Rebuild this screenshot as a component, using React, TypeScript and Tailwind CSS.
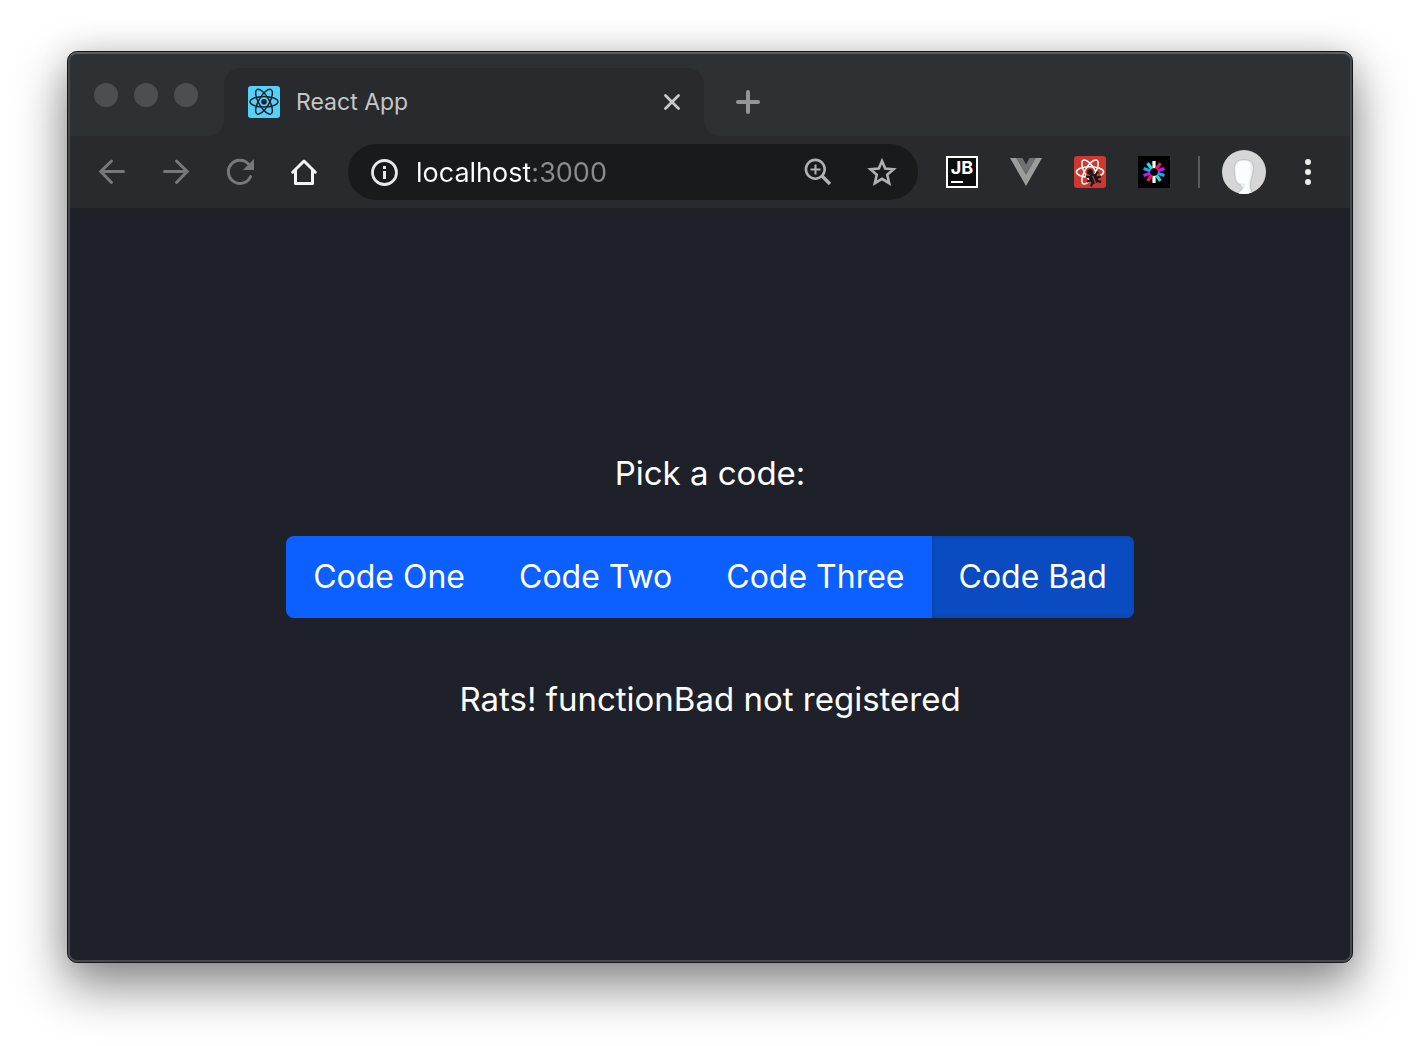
import { useState } from "react";

const codes = ["Code One", "Code Two", "Code Three", "Code Bad"];

function ReactIcon() {
  return (
    <svg viewBox="0 0 32 32" className="size-8 shrink-0" aria-hidden="true">
      <rect width="32" height="32" rx="3" fill="#53d1fd" />
      <g fill="none" stroke="#20232a" strokeWidth="1.5">
        <ellipse cx="16" cy="15.7" rx="14" ry="5.3" />
        <ellipse cx="16" cy="15.7" rx="14" ry="5.3" transform="rotate(60 16 15.7)" />
        <ellipse cx="16" cy="15.7" rx="14" ry="5.3" transform="rotate(120 16 15.7)" />
      </g>
      <circle cx="16" cy="15.7" r="2.8" fill="#20232a" />
    </svg>
  );
}

function BackIcon() {
  return (
    <svg viewBox="0 0 32 32" className="size-8" fill="none" stroke="#77787a" strokeWidth="3" strokeLinecap="round" aria-hidden="true">
      <path d="M27.5 15.5H5M15.5 5L4.8 15.5L15.5 26.5" />
    </svg>
  );
}

function ForwardIcon() {
  return (
    <svg viewBox="0 0 32 32" className="size-8" fill="none" stroke="#77787a" strokeWidth="3" strokeLinecap="round" aria-hidden="true">
      <path d="M4.5 15.5H27M16.5 5L27.2 15.5L16.5 26.5" />
    </svg>
  );
}

function ReloadIcon() {
  return (
    <svg viewBox="0 0 32 32" className="size-8" aria-hidden="true">
      <path d="M24.5 8A11.6 11.6 0 1 0 26.6 20.5" fill="none" stroke="#77787a" strokeWidth="3" strokeLinecap="round" />
      <path d="M30 3V14H19Z" fill="#77787a" />
    </svg>
  );
}

function HomeIcon() {
  return (
    <svg viewBox="0 0 32 32" className="size-8" fill="none" stroke="#f4f4f5" strokeWidth="3" strokeLinejoin="round" strokeLinecap="round" aria-hidden="true">
      <path d="M4.7 16.2L16 5L27.3 16.2M7.5 14.5V27.5H24.5V14.5" />
    </svg>
  );
}

function InfoIcon() {
  return (
    <svg viewBox="0 0 28 28" className="size-7 shrink-0" aria-hidden="true">
      <circle cx="14.5" cy="14.5" r="12" fill="none" stroke="#e8e8e9" strokeWidth="2.8" />
      <path d="M13 8h3v3h-3zM13 13h3v8h-3z" fill="#e8e8e9" />
    </svg>
  );
}

function ZoomIcon() {
  return (
    <svg viewBox="0 0 32 32" className="size-8" fill="none" stroke="#b0b1b2" aria-hidden="true">
      <circle cx="13.3" cy="13.3" r="9.4" strokeWidth="2.6" />
      <path d="M20 20L28 28" strokeWidth="3.4" />
      <path d="M13.5 8.5v10M8.5 13.5h10" strokeWidth="2" />
    </svg>
  );
}

function StarIcon() {
  return (
    <svg viewBox="0 0 32 32" className="size-8" fill="none" stroke="#b0b1b2" strokeWidth="2.6" aria-hidden="true">
      <path d="M16 5L19.2 12.5L27.6 13.3L21.2 18.7L23.2 27.2L16 22.8L8.8 27.2L10.8 18.7L4.4 13.3L12.8 12.5Z" />
    </svg>
  );
}

function VueIcon() {
  return (
    <svg viewBox="0 0 32 32" className="size-8" aria-hidden="true">
      <path d="M0 2H6.5L16 18.5L25.5 2H32L16 30Z" fill="#9c9c9c" />
      <path d="M6.5 2H12.5L16 8.5L19.5 2H25.5L16 18.5Z" fill="#707173" />
    </svg>
  );
}

function ReactDebugIcon() {
  return (
    <svg viewBox="0 0 32 32" className="size-8" aria-hidden="true">
      <rect width="32" height="32" rx="3" fill="#cf372f" />
      <g fill="none" stroke="#fff" strokeWidth="1.5">
        <ellipse cx="16" cy="16" rx="13.6" ry="5.2" />
        <ellipse cx="16" cy="16" rx="13.6" ry="5.2" transform="rotate(60 16 16)" />
        <ellipse cx="16" cy="16" rx="13.6" ry="5.2" transform="rotate(120 16 16)" />
      </g>
      <path d="M15 21L26 18L27 29H16Z" fill="#cf372f" />
      <circle cx="16" cy="15.8" r="2.9" fill="#16181b" />
      <g transform="rotate(-22 16 16)">
        <ellipse cx="17" cy="23.6" rx="4.2" ry="5.2" fill="#16181b" />
        <path d="M10.5 18.5l3.5 2.5M9.5 24h4M11.5 29.5l3-2.5M23.5 18.5l-3.5 2.5M24.5 24h-4M22.5 29.5l-3-2.5" stroke="#16181b" strokeWidth="2.2" />
        <path d="M17 20.5V29" stroke="#cf372f" strokeWidth="1.2" />
      </g>
    </svg>
  );
}

const rays = [
  "#ffffff", "#ff1254", "#cf12f5", "#1ba4f5", "#23e5d5",
  "#ffffff", "#ff1254", "#cf12f5", "#1ba4f5", "#23e5d5",
];

function BurstIcon() {
  return (
    <svg viewBox="0 0 32 32" className="size-8" aria-hidden="true">
      <rect width="32" height="32" fill="#000" />
      {rays.map((color, i) => (
        <rect key={i} x="14.4" y="5" width="3.2" height="7.2" fill={color} transform={`rotate(${i * 36} 16 16)`} />
      ))}
    </svg>
  );
}

function AvatarIcon() {
  return (
    <svg viewBox="0 0 44 44" className="size-11" aria-hidden="true">
      <defs>
        <clipPath id="avatar-circle">
          <circle cx="22" cy="22" r="22" />
        </clipPath>
      </defs>
      <g clipPath="url(#avatar-circle)">
        <rect width="44" height="44" fill="#d6d6d6" />
        <path d="M12.5 22C11.5 13 15 9.5 22 9.5C29 9.5 32.5 13 31.3 21C30.5 27 28 31 28.5 37L30.5 45H12C16 42 20 41 20 38C20 36.5 17 36.5 18.5 34.5C13.5 34 13 29 12.5 22Z" fill="#e6ecf1" stroke="#b0bcc6" strokeWidth="0.8" />
        <path d="M13.5 22C12.5 13 17 11 22 11C28 11 30 14 29 22C28.5 28 26 31 27 37L29 45H14C19 42 23 39 23 33.5L18 33.5C14 31 14 27 13.5 22Z" fill="#fcfdff" />
      </g>
    </svg>
  );
}

function TabStrip() {
  return (
    <div className="flex h-[82px] items-end bg-[#2e3134]">
      <div className="flex h-[82px] w-[138px] shrink-0 items-center gap-4 pl-6">
        <button type="button" aria-label="Close window" className="size-6 rounded-full bg-[#4b4f52]" />
        <button type="button" aria-label="Minimize window" className="size-6 rounded-full bg-[#4b4f52]" />
        <button type="button" aria-label="Zoom window" className="size-6 rounded-full bg-[#4b4f52]" />
      </div>
      <div className="size-4 shrink-0 bg-[#292a2d]">
        <div className="size-4 rounded-br-2xl bg-[#2e3134]" />
      </div>
      <div className="flex h-[68px] w-[480px] items-center gap-4 rounded-t-2xl bg-[#292a2d] px-6">
        <ReactIcon />
        <span className="flex-1 font-[Inter] text-[23px] text-[#c5c6c7]">React App</span>
        <button type="button" aria-label="Close tab">
          <svg viewBox="0 0 16 16" className="size-4" stroke="#c9cacb" strokeWidth="2.8" strokeLinecap="round" aria-hidden="true">
            <path d="M1.5 1.5L14.5 14.5M14.5 1.5L1.5 14.5" />
          </svg>
        </button>
      </div>
      <div className="size-4 shrink-0 bg-[#292a2d]">
        <div className="size-4 rounded-bl-2xl bg-[#2e3134]" />
      </div>
      <button type="button" aria-label="New tab" className="flex h-[68px] items-center px-4">
        <svg viewBox="0 0 24 24" className="size-6" stroke="#919699" strokeWidth="4" strokeLinecap="round" aria-hidden="true">
          <path d="M12 2V22M2 12H22" />
        </svg>
      </button>
    </div>
  );
}

function Toolbar() {
  return (
    <div className="flex h-[72px] items-center bg-[#292a2d] px-[26px]">
      <div className="flex gap-8">
        <button type="button" aria-label="Back"><BackIcon /></button>
        <button type="button" aria-label="Forward"><ForwardIcon /></button>
        <button type="button" aria-label="Reload"><ReloadIcon /></button>
        <button type="button" aria-label="Home"><HomeIcon /></button>
      </div>
      <div className="mx-7 flex h-14 min-w-0 flex-1 items-center rounded-full bg-[#191a1b] pr-5 pl-[22px]">
        <InfoIcon />
        <input
          type="text"
          aria-label="Address"
          defaultValue="localhost:3000"
          className="ml-[18px] min-w-0 flex-1 bg-linear-to-r from-white from-[114px] to-[#8b8c8d] to-[114px] bg-clip-text pt-[2px] font-[Inter] text-[27px] text-transparent caret-white outline-none"
        />
        <div className="flex gap-8">
          <button type="button" aria-label="Zoom level"><ZoomIcon /></button>
          <button type="button" aria-label="Bookmark this page"><StarIcon /></button>
        </div>
      </div>
      <div className="flex gap-8">
        <button type="button" aria-label="JetBrains extension" className="flex size-8 flex-col items-center border-2 border-white bg-[#0c0c0c]">
          <span className="font-[Inter] text-lg leading-5 font-bold text-white">JB</span>
          <span className="mt-[3px] ml-[3px] h-[2px] w-3 self-start bg-white" />
        </button>
        <button type="button" aria-label="Vue extension"><VueIcon /></button>
        <button type="button" aria-label="React extension"><ReactDebugIcon /></button>
        <button type="button" aria-label="Burst extension"><BurstIcon /></button>
      </div>
      <div className="mr-[22px] ml-7 h-8 w-[2px] bg-[#5a5b5e]" />
      <button type="button" aria-label="Profile"><AvatarIcon /></button>
      <button type="button" aria-label="Menu" className="ml-[26px]">
        <svg viewBox="0 0 32 32" className="size-8" fill="#ededee" aria-hidden="true">
          <circle cx="16" cy="6" r="3" />
          <circle cx="16" cy="16" r="3" />
          <circle cx="16" cy="26" r="3" />
        </svg>
      </button>
    </div>
  );
}

function CodePicker() {
  const [active, setActive] = useState("Code Bad");
  return (
    <main className="flex flex-1 flex-col items-center justify-center border-t-2 border-[#202124] bg-[#1e2129] pt-[2px] font-[Inter] text-[33px] leading-[54px] text-white">
      <p>Pick a code:</p>
      <div role="group" aria-label="Codes" className="mt-9 flex overflow-hidden rounded-lg bg-[#0b60ff]">
        {codes.map((code) => (
          <button
            key={code}
            type="button"
            aria-pressed={active === code}
            onClick={() => setActive(code)}
            className="h-[82px] px-[27px] text-[32px] aria-pressed:bg-[#0a4bc1] aria-pressed:inset-shadow-[0_0_4px_#08409f]"
          >
            {code}
          </button>
        ))}
      </div>
      <p className="mt-[54px]">Rats! functionBad not registered</p>
    </main>
  );
}

export default function App() {
  return (
    <div className="flex min-h-screen flex-col bg-white px-[67px] pt-[51px] pb-[83px]">
      <div className="flex flex-1 flex-col overflow-hidden rounded-[10px] border border-[#151618] bg-[#48494d] shadow-[0_22px_50px_2px_rgba(0,0,0,0.45),0_0_30px_rgba(0,0,0,0.1)]">
        <div className="flex flex-1 flex-col overflow-hidden rounded-[9px] border-2 border-[#48494d] border-t-[#5b5f62]">
          <TabStrip />
          <Toolbar />
          <CodePicker />
        </div>
      </div>
    </div>
  );
}
